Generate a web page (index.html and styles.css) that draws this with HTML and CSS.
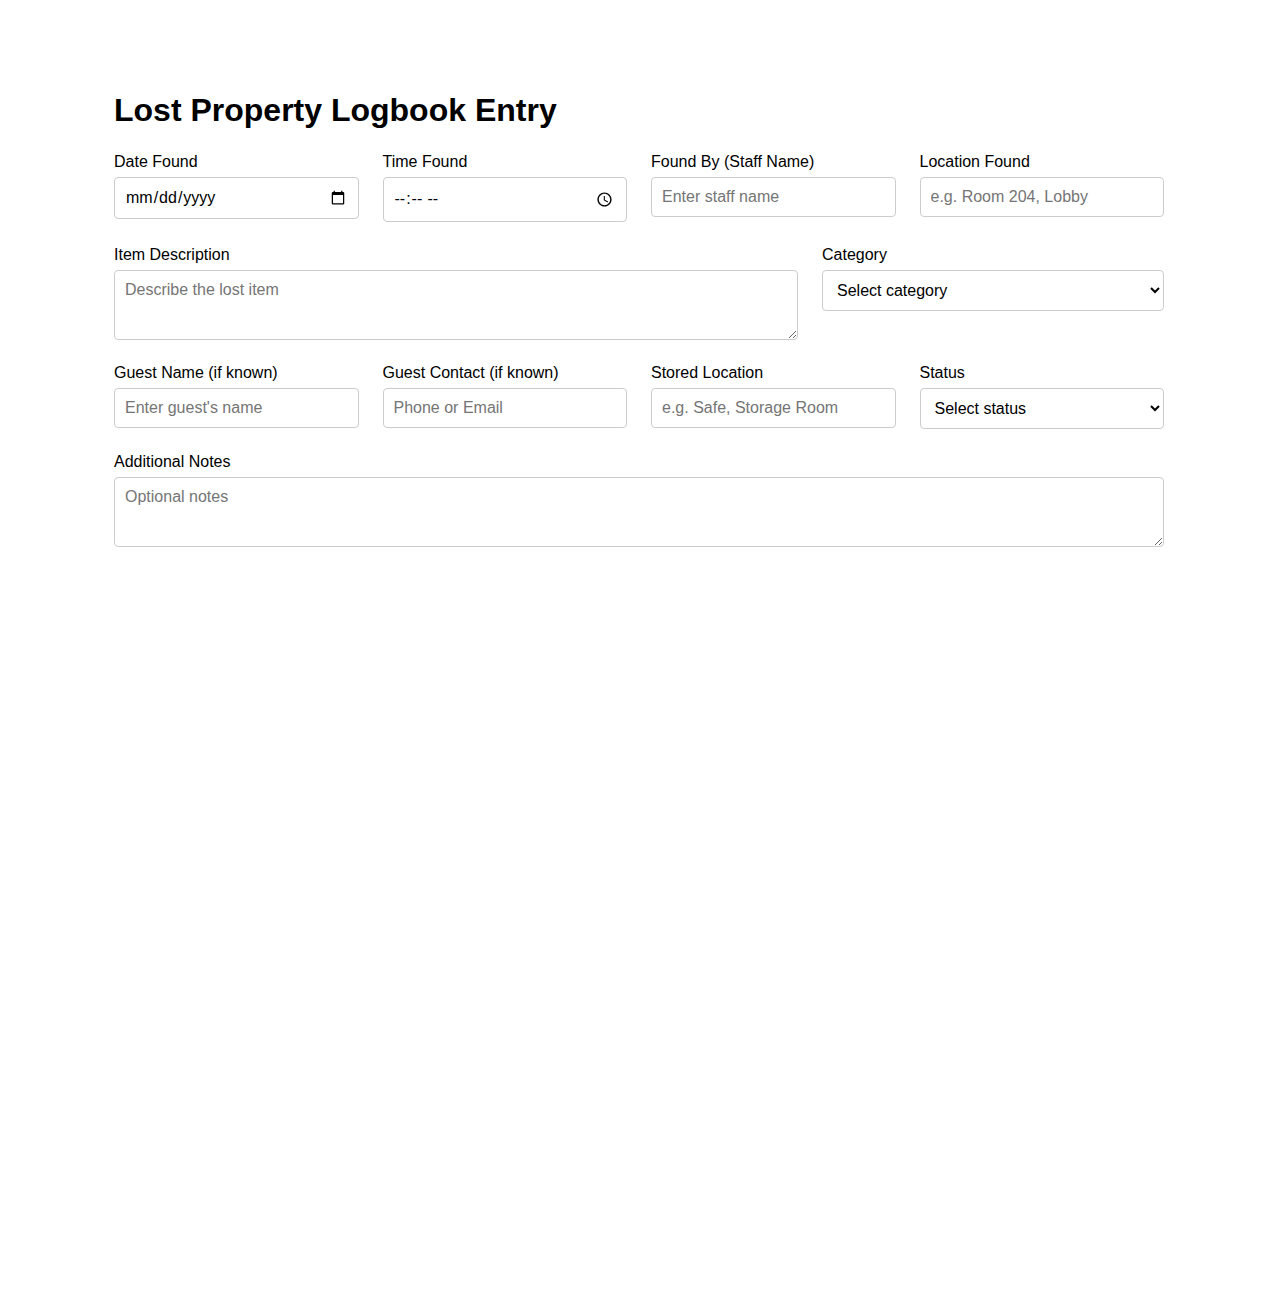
FILE: index.html
```html
<!DOCTYPE html>
<html lang="en">
<head>
  <meta charset="UTF-8">
  <meta name="viewport" content="width=device-width, initial-scale=1.0">
  <title>Lost Property Logbook Entry</title>
  <link rel="stylesheet" href="styles.css">
</head>
<body>
  <div class="container">
    <h1>Lost Property Logbook Entry</h1>

    <form class="log-form">
      <div class="row">
        <div class="field">
          <label for="dateFound">Date Found</label>
          <input type="date" id="dateFound">
        </div>
        <div class="field">
          <label for="timeFound">Time Found</label>
          <input type="time" id="timeFound">
        </div>
        <div class="field">
          <label for="foundBy">Found By (Staff Name)</label>
          <input type="text" id="foundBy" placeholder="Enter staff name">
        </div>
        <div class="field">
          <label for="locationFound">Location Found</label>
          <input type="text" id="locationFound" placeholder="e.g. Room 204, Lobby">
        </div>
      </div>

      <div class="row">
        <div class="field wide">
          <label for="description">Item Description</label>
          <textarea id="description" placeholder="Describe the lost item"></textarea>
        </div>
        <div class="field">
          <label for="category">Category</label>
          <select id="category">
            <option value="">Select category</option>
            <option>Electronics</option>
            <option>Clothing</option>
            <option>Jewellery</option>
            <option>Documents</option>
            <option>Other</option>
          </select>
        </div>
      </div>

      <div class="row">
        <div class="field">
          <label for="guestName">Guest Name (if known)</label>
          <input type="text" id="guestName" placeholder="Enter guest's name">
        </div>
        <div class="field">
          <label for="guestContact">Guest Contact (if known)</label>
          <input type="text" id="guestContact" placeholder="Phone or Email">
        </div>
        <div class="field">
          <label for="storedLocation">Stored Location</label>
          <input type="text" id="storedLocation" placeholder="e.g. Safe, Storage Room">
        </div>
        <div class="field">
          <label for="status">Status</label>
          <select id="status">
            <option value="">Select status</option>
            <option>Stored</option>
            <option>Claimed</option>
            <option>Disposed</option>
          </select>
        </div>
      </div>

      <div class="row">
        <div class="field">
          <label for="notes">Additional Notes</label>
          <textarea id="notes" placeholder="Optional notes"></textarea>
        </div>
      </div>
    </form>
  </div>
</body>
</html>
```

FILE: styles.css
```css
body {
  font-family: Arial, "Liberation Sans", sans-serif;
  margin: 0;
  background-color: #fff;
  color: #000;
}

.container {
  max-width: 1050px;
  margin: 0 auto;
  padding-top: 92px;
}

h1 {
  font-size: 32px;
  margin: 0 0 24px;
}

.log-form {
  display: flex;
  flex-direction: column;
  gap: 24px;
}

.row {
  display: flex;
  gap: 24px;
}

.field {
  flex: 1;
  min-width: 0;
}

.field.wide {
  flex: 2;
}

label {
  display: block;
  font-size: 16px;
  margin-bottom: 6px;
}

input,
select,
textarea {
  width: 100%;
  box-sizing: border-box;
  padding: 10px;
  font-family: inherit;
  font-size: 16px;
  border: 1px solid #ccc;
  border-radius: 4px;
  background-color: #fff;
}

textarea {
  display: block;
  height: 70px;
  resize: vertical;
}
```
